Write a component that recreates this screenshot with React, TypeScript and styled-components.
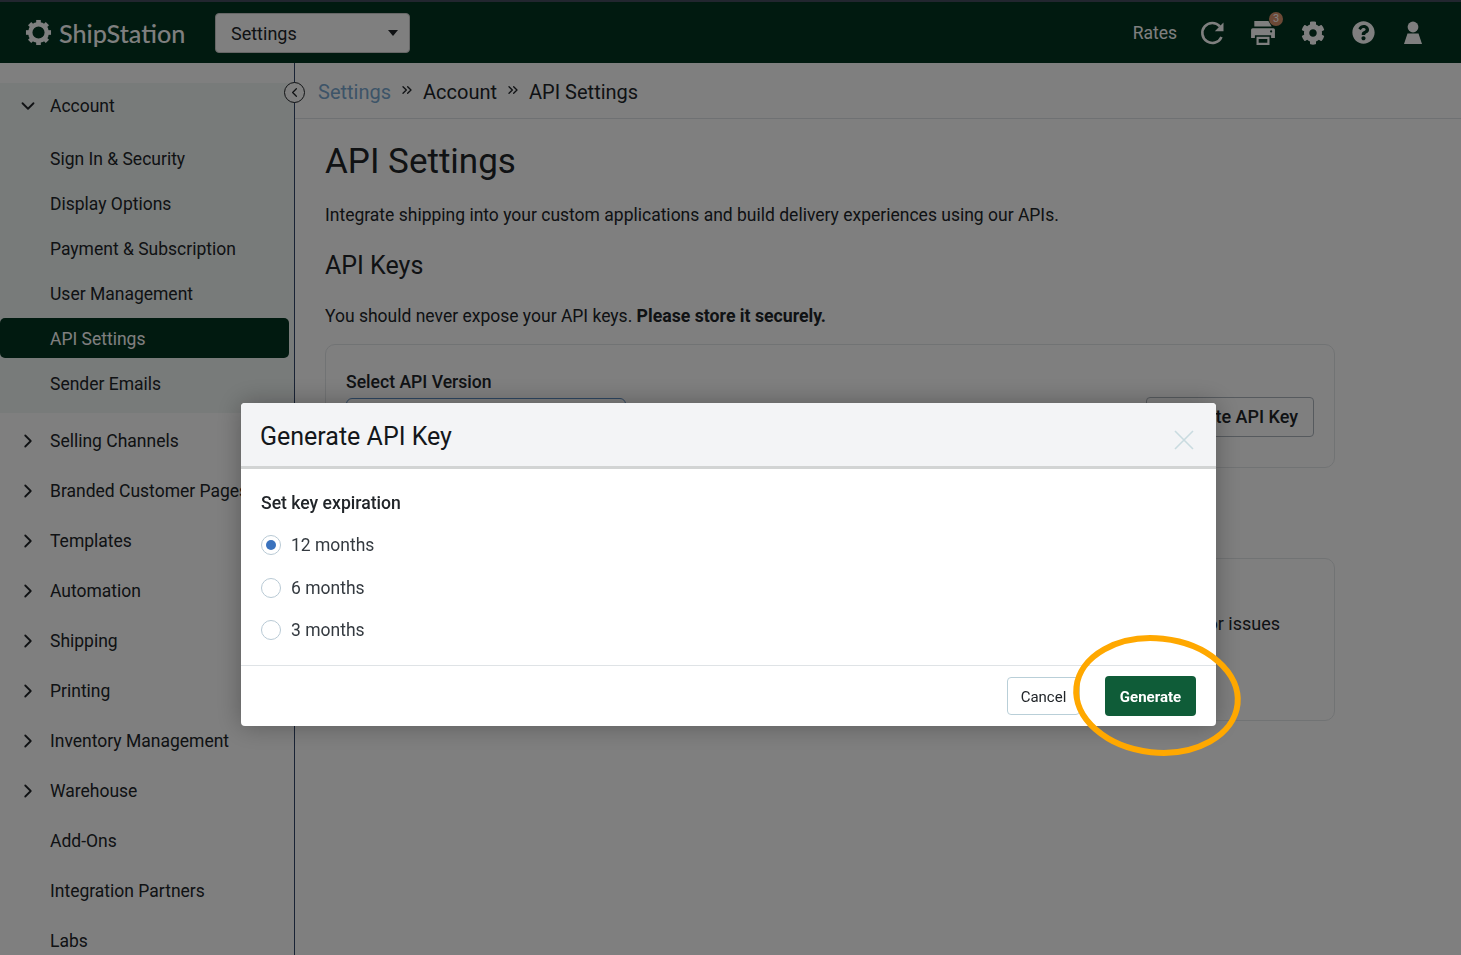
import styled, { createGlobalStyle } from 'styled-components'
import { FaCog, FaQuestionCircle } from 'react-icons/fa'
import { FiChevronDown, FiChevronLeft, FiChevronRight, FiChevronsRight } from 'react-icons/fi'

const GlobalStyle = createGlobalStyle`
  html, body {
    margin: 0;
    height: 100%;
    overflow: hidden;
    background: #fff;
    font-family: Roboto, "Liberation Sans", sans-serif;
    color: #212529;
  }
  * {
    box-sizing: border-box;
  }
`

const Page = styled.div`
  height: 955px;
  display: flex;
  flex-direction: column;
  overflow: hidden;
`

const TopBar = styled.header`
  height: 63px;
  flex: none;
  display: flex;
  align-items: center;
  padding: 0 23px 0 25px;
  background: #023420;
  border-top: 2px solid #454c5e;
`

const Logo = styled.div`
  display: flex;
  align-items: center;
  gap: 7px;
  width: 190px;
  color: #fff;
  font-family: Lato, sans-serif;
  font-size: 25.2px;
  font-weight: 500;
  letter-spacing: 0;
`

const AppSelect = styled.div`
  width: 195px;
  height: 40px;
  display: flex;
  align-items: center;
  justify-content: space-between;
  padding: 1px 11px 0 15px;
  background: #fff;
  border: 1px solid #ccc;
  border-radius: 4px;
  font-size: 18px;
`

const Caret = styled.span`
  width: 0;
  height: 0;
  border-left: 5.5px solid transparent;
  border-right: 5.5px solid transparent;
  border-top: 6px solid #212529;
`

const TopActions = styled.div`
  margin-left: auto;
  display: flex;
  align-items: center;
  color: #fff;
`

const RatesLink = styled.span`
  font-size: 17.5px;
  margin: 1px 11px 0 0;
`

const IconSlot = styled.span`
  position: relative;
  width: 50px;
  height: 30px;
  display: flex;
  align-items: center;
  justify-content: center;
  font-size: 24px;
`

const Badge = styled.span`
  position: absolute;
  top: -6px;
  left: 31px;
  width: 14px;
  height: 14px;
  border-radius: 50%;
  display: flex;
  align-items: center;
  justify-content: center;
  background: #d9926c;
  font-size: 11px;
`

const Body = styled.div`
  flex: 1;
  display: flex;
  min-height: 0;
`

const Sidebar = styled.nav`
  position: relative;
  width: 295px;
  flex: none;
  padding-top: 20px;
  border-right: 1px solid #33476b;
`

const AccountGroup = styled.div`
  height: 330px;
  margin-bottom: 3px;
  background: #f1f6f5;
`

const GroupHead = styled.div`
  height: 45px;
  display: flex;
  align-items: center;
  margin-bottom: 8px;
`

const NavRow = styled.div<{ $active?: boolean }>`
  height: ${(p) => (p.$active ? '40px' : '45px')};
  margin: ${(p) => (p.$active ? '2px 5px 3px 0' : '0')};
  display: flex;
  align-items: center;
  padding: ${(p) => (p.$active ? '1px 0 0 50px' : '0 0 0 50px')};
  font-size: 17.5px;
  white-space: nowrap;
  border-radius: ${(p) => (p.$active ? '5px' : '0')};
  background: ${(p) => (p.$active ? '#023420' : 'transparent')};
  color: ${(p) => (p.$active ? '#fff' : '#212529')};
`

const NavSection = styled.div`
  height: 50px;
  display: flex;
  align-items: center;
  font-size: 17.5px;
  white-space: nowrap;
  padding-left: 50px;
`

const NavLabel = styled.span`
  font-size: 17.5px;
`

const ChevronSlot = styled.span`
  width: 50px;
  display: flex;
  justify-content: center;
  margin-left: -50px;
  padding-left: 6px;
  font-size: 22px;
`

const HeadChevron = styled(ChevronSlot)`
  margin-left: 0;
`

const CollapseToggle = styled.span`
  position: absolute;
  top: 19px;
  right: -11px;
  width: 21px;
  height: 21px;
  display: flex;
  align-items: center;
  justify-content: center;
  border: 1.5px solid #212529;
  border-radius: 50%;
  background: #fff;
  font-size: 15px;
`

const Main = styled.main`
  flex: 1;
  min-width: 0;
`

const Breadcrumbs = styled.div`
  height: 56px;
  display: flex;
  align-items: center;
  padding: 3px 0 0 23px;
  border-bottom: 1px solid #dee2e6;
  font-size: 20px;
`

const CrumbLink = styled.span`
  color: #7aa8d0;
`

const CrumbSep = styled.span`
  display: flex;
  margin: -4px 8px 0;
  font-size: 16px;
`

const Content = styled.div`
  padding: 21px 126px 0 30px;
`

const Title = styled.h1`
  margin: 0;
  font-size: 35px;
  line-height: 44px;
  font-weight: 400;
`

const Lead = styled.p`
  margin: 19px 0 0;
  font-size: 17.5px;
  line-height: 24px;
`

const SubTitle = styled.h2`
  margin: 23px 0 0;
  font-size: 25px;
  line-height: 32px;
  font-weight: 400;
`

const Note = styled.p`
  margin: 22px 0 0;
  font-size: 17.5px;
  line-height: 24px;

  b {
    font-size: 17.7px;
    font-weight: 700;
  }
`

const Card = styled.section`
  margin-top: 16px;
  height: 124px;
  padding: 26px 20px 24px;
  display: flex;
  justify-content: space-between;
  border: 1px solid #e3e6e8;
  border-radius: 10px;
`

const FieldLabel = styled.div`
  font-size: 17.6px;
  font-weight: 500;
  line-height: 22px;
`

const FieldInput = styled.div`
  width: 280px;
  height: 40px;
  margin-top: 5px;
  border: 1px solid #5e8ec4;
  border-radius: 6px;
`

const OutlineButton = styled.div`
  align-self: flex-end;
  height: 40px;
  margin-bottom: 6px;
  padding: 0 15px 1px 11px;
  display: flex;
  align-items: center;
  border: 1px solid #adb5bd;
  border-radius: 4px;
  font-size: 18px;
  font-weight: 500;
`

const StatusCard = styled(Card)`
  margin-top: 90px;
  height: 163px;
  padding: 54px 54px 0 20px;
  justify-content: flex-end;
  font-size: 18px;
`

const Backdrop = styled.div`
  position: fixed;
  inset: 0;
  background: rgba(0, 0, 0, 0.5);
`

const Modal = styled.div`
  position: fixed;
  top: 403px;
  left: 241px;
  width: 975px;
  height: 323px;
  display: flex;
  flex-direction: column;
  background: #fff;
  border-radius: 4px;
  box-shadow: 0 0 26px rgba(0, 0, 0, 0.3);
`

const ModalHead = styled.div`
  height: 66px;
  flex: none;
  display: flex;
  align-items: center;
  justify-content: space-between;
  padding: 4px 22px 0 19px;
  background: #f3f4f6;
  border-bottom: 3px solid #d2d4d4;
  border-radius: 4px 4px 0 0;
`

const ModalTitle = styled.h3`
  margin: 0;
  font-size: 25px;
  font-weight: 400;
  color: #14171a;
`

const CloseIcon = styled.svg`
  margin-top: 7px;
`

const ModalBody = styled.div`
  flex: 1;
  padding: 23px 20px 0;
`

const RadioHeading = styled.div`
  font-size: 17.6px;
  font-weight: 500;
  line-height: 22px;
  margin-bottom: 10px;
`

const RadioRow = styled.label`
  height: 42.5px;
  display: flex;
  align-items: center;
  gap: 10px;
  font-size: 17.5px;
  color: #343a40;
`

const RadioDot = styled.span<{ $checked?: boolean }>`
  width: 20px;
  height: 20px;
  display: flex;
  align-items: center;
  justify-content: center;
  border: 1px solid #b8c9d4;
  border-radius: 50%;

  &::after {
    content: '';
    width: 10px;
    height: 10px;
    border-radius: 50%;
    background: ${(p) => (p.$checked ? '#3a72bd' : 'transparent')};
  }
`

const ModalFoot = styled.div`
  height: 61px;
  flex: none;
  display: flex;
  align-items: center;
  justify-content: flex-end;
  gap: 25px;
  padding: 0 20px;
  border-top: 1px solid #dfe3e6;
`

const CancelButton = styled.button`
  width: 73px;
  height: 38px;
  padding: 1px 0 0;
  background: #fff;
  border: 1px solid #b9cfd8;
  border-radius: 4px;
  font-family: inherit;
  font-size: 15px;
  color: #212529;
`

const GenerateButton = styled.button`
  width: 91px;
  height: 40px;
  padding: 1px 0 0;
  background: #0f5c38;
  border: none;
  border-radius: 4px;
  font-family: inherit;
  font-size: 15px;
  font-weight: 700;
  color: #fff;
`

const Highlight = styled.svg`
  position: fixed;
  top: 632px;
  left: 1072px;
`

const accountItems = ['Sign In & Security', 'Display Options', 'Payment & Subscription', 'User Management', 'API Settings', 'Sender Emails']

const sections = [
  { label: 'Selling Channels', arrow: true },
  { label: 'Branded Customer Pages', arrow: true },
  { label: 'Templates', arrow: true },
  { label: 'Automation', arrow: true },
  { label: 'Shipping', arrow: true },
  { label: 'Printing', arrow: true },
  { label: 'Inventory Management', arrow: true },
  { label: 'Warehouse', arrow: true },
  { label: 'Add-Ons', arrow: false },
  { label: 'Integration Partners', arrow: false },
  { label: 'Labs', arrow: false },
]

const teeth = [0, 45, 90, 135, 180, 225, 270, 315]

const LogoMark = () => (
  <svg width="27" height="27" viewBox="0 0 28 28" fill="none">
    <circle cx="14" cy="14" r="8.6" stroke="#fff" strokeWidth="4.6" />
    {teeth.map((deg) => (
      <rect key={deg} x="11.6" y="1" width="4.8" height="4" fill="#fff" transform={`rotate(${deg} 14 14)`} />
    ))}
  </svg>
)

const RefreshIcon = () => (
  <svg width="26" height="26" viewBox="0 0 26 26" fill="none">
    <path d="M21.5 17a10 10 0 1 1-1.6-10.6" stroke="#fff" strokeWidth="2.6" />
    <path d="M23.5 2.5v8.7h-8.7z" fill="#fff" />
  </svg>
)

const PrinterIcon = () => (
  <svg width="26" height="26" viewBox="0 0 24 24" fill="#fff">
    <path d="M4 1h13l3 5H4z" />
    <path fillRule="evenodd" d="M2.5 7.500h19a1.500 1.500 0 0 1 1.500 1.500v7.500h-3.500V14h-15v2.500H1V9a1.500 1.500 0 0 1 1.500-1.500zM19.500 9.500a1 1 0 1 0 0 2 1 1 0 0 0 0-2z" />
    <path d="M6 15.500h12V23H6zM8 17.500v3.500h8v-3.500z" fillRule="evenodd" />
  </svg>
)

const UserIcon = () => (
  <svg width="20" height="24" viewBox="0 0 20 24" fill="#fff">
    <circle cx="10" cy="6" r="5.400" />
    <path d="M4.500 12.500h11L19 23H1z" />
  </svg>
)

const App = () => {
  return (
    <>
      <GlobalStyle />
      <Page>
        <TopBar>
          <Logo>
            <LogoMark />
            ShipStation
          </Logo>
          <AppSelect>
            Settings
            <Caret />
          </AppSelect>
          <TopActions>
            <RatesLink>Rates</RatesLink>
            <IconSlot>
              <RefreshIcon />
            </IconSlot>
            <IconSlot>
              <PrinterIcon />
              <Badge>3</Badge>
            </IconSlot>
            <IconSlot>
              <FaCog />
            </IconSlot>
            <IconSlot>
              <FaQuestionCircle size={23} />
            </IconSlot>
            <IconSlot>
              <UserIcon />
            </IconSlot>
          </TopActions>
        </TopBar>
        <Body>
          <Sidebar>
            <CollapseToggle>
              <FiChevronLeft />
            </CollapseToggle>
            <AccountGroup>
              <GroupHead>
                <HeadChevron>
                  <FiChevronDown />
                </HeadChevron>
                <NavLabel>Account</NavLabel>
              </GroupHead>
              {accountItems.map((item) => (
                <NavRow key={item} $active={item === 'API Settings'}>
                  {item}
                </NavRow>
              ))}
            </AccountGroup>
            {sections.map((section) => (
              <NavSection key={section.label}>
                {section.arrow && (
                  <ChevronSlot>
                    <FiChevronRight />
                  </ChevronSlot>
                )}
                {section.label}
              </NavSection>
            ))}
          </Sidebar>
          <Main>
            <Breadcrumbs>
              <CrumbLink>Settings</CrumbLink>
              <CrumbSep>
                <FiChevronsRight />
              </CrumbSep>
              Account
              <CrumbSep>
                <FiChevronsRight />
              </CrumbSep>
              API Settings
            </Breadcrumbs>
            <Content>
              <Title>API Settings</Title>
              <Lead>Integrate shipping into your custom applications and build delivery experiences using our APIs.</Lead>
              <SubTitle>API Keys</SubTitle>
              <Note>
                You should never expose your API keys. <b>Please store it securely.</b>
              </Note>
              <Card>
                <div>
                  <FieldLabel>Select API Version</FieldLabel>
                  <FieldInput />
                </div>
                <OutlineButton>Generate API Key</OutlineButton>
              </Card>
              <StatusCard>Contact support for issues</StatusCard>
            </Content>
          </Main>
        </Body>
      </Page>
      <Backdrop />
      <Modal>
        <ModalHead>
          <ModalTitle>Generate API Key</ModalTitle>
          <CloseIcon width="20" height="20" viewBox="0 0 20 20" stroke="#c9dbe0" strokeWidth="1.600">
            <path d="M1 1l18 18M19 1L1 19" />
          </CloseIcon>
        </ModalHead>
        <ModalBody>
          <RadioHeading>Set key expiration</RadioHeading>
          <RadioRow>
            <RadioDot $checked />
            12 months
          </RadioRow>
          <RadioRow>
            <RadioDot />
            6 months
          </RadioRow>
          <RadioRow>
            <RadioDot />
            3 months
          </RadioRow>
        </ModalBody>
        <ModalFoot>
          <CancelButton>Cancel</CancelButton>
          <GenerateButton>Generate</GenerateButton>
        </ModalFoot>
      </Modal>
      <Highlight width="176" height="128" viewBox="0 0 176 128" fill="none">
        <ellipse cx="85" cy="63.5" rx="81" ry="57" stroke="#ffa800" strokeWidth="6" transform="rotate(6 85 63.5)" />
      </Highlight>
    </>
  )
}

export default App
